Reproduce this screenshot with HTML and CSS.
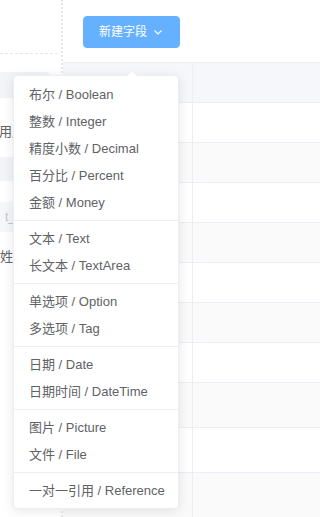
FILE: index.html
```html
<!DOCTYPE html>
<html lang="zh">
<head>
<meta charset="utf-8">
<title>新建字段</title>
<link rel="stylesheet" href="styles.css">
</head>
<body>
<div class="page">
  <aside class="side">
    <div class="side-top"></div>
    <div class="side-band"></div>
    <div class="side-label">用户名</div>
    <div class="side-band2"></div>
    <div class="side-input">t_</div>
    <div class="side-label2">姓名</div>
  </aside>
  <main class="main">
    <div class="toolbar">
      <button class="btn">新建字段<svg class="chev" viewBox="0 0 12 12" width="12" height="12"><polyline points="2.5,4.5 6,8 9.5,4.5" fill="none" stroke="#fff" stroke-width="1.1"/></svg></button>
    </div>
    <div class="table">
      <div class="row head"><div class="c1"></div><div class="c2"></div></div>
      <div class="row"><div class="c1"></div><div class="c2"></div></div>
      <div class="row stripe"><div class="c1"></div><div class="c2"></div></div>
      <div class="row"><div class="c1"></div><div class="c2"></div></div>
      <div class="row stripe"><div class="c1"></div><div class="c2"></div></div>
      <div class="row"><div class="c1"></div><div class="c2"></div></div>
      <div class="row stripe"><div class="c1"></div><div class="c2"></div></div>
      <div class="row"><div class="c1"></div><div class="c2"></div></div>
      <div class="row stripe tall"><div class="c1"></div><div class="c2"></div></div>
      <div class="row tall"><div class="c1"></div><div class="c2"></div></div>
      <div class="row stripe tall"><div class="c1"></div><div class="c2"></div></div>
    </div>
  </main>
  <ul class="menu">
    <li class="item">布尔 / Boolean</li>
    <li class="item">整数 / Integer</li>
    <li class="item">精度小数 / Decimal</li>
    <li class="item">百分比 / Percent</li>
    <li class="item">金额 / Money</li>
    <li class="item divided">文本 / Text</li>
    <li class="item">长文本 / TextArea</li>
    <li class="item divided">单选项 / Option</li>
    <li class="item">多选项 / Tag</li>
    <li class="item divided">日期 / Date</li>
    <li class="item">日期时间 / DateTime</li>
    <li class="item divided">图片 / Picture</li>
    <li class="item">文件 / File</li>
    <li class="item divided">一对一引用 / Reference</li>
  </ul>
</div>
</body>
</html>
```

FILE: styles.css
```css
html, body {
  margin: 0;
  padding: 0;
  background: #fff;
}
body {
  font-family: "Liberation Sans", "Noto Sans CJK SC", sans-serif;
  height: 517px;
  overflow: hidden;
}
.page {
  position: relative;
  display: flex;
  width: 100%;
  height: 517px;
  overflow: hidden;
}
.side {
  width: 61px;
  flex: none;
  border-right: 2px dotted #e6e8ef;
  overflow: hidden;
  font-size: 13px;
  color: #606266;
}
.side-top {
  height: 53px;
  border-bottom: 1px dashed #e4e7ed;
  margin-right: 3px;
}
.side-band {
  margin-top: 18px;
  height: 26px;
  width: 50px;
  background: #f3f4f7;
  border-radius: 0 4px 4px 0;
}
.side-label {
  margin-top: 26px;
  margin-left: -1px;
  line-height: 16px;
  white-space: nowrap;
}
.side-band2 {
  margin-top: 17px;
  height: 24px;
  width: 40px;
  background: #f3f4f7;
}
.side-input {
  margin-top: 21px;
  height: 30px;
  line-height: 30px;
  width: 50px;
  padding-left: 5px;
  box-sizing: border-box;
  background: #f5f7fa;
  color: #c0c4cc;
  font-size: 12px;
}
.side-label2 {
  margin-top: 17px;
  line-height: 16px;
  white-space: nowrap;
}
.main {
  flex: 1;
  display: flex;
  flex-direction: column;
}
.toolbar {
  height: 62px;
  padding: 16px 0 0 20px;
  box-sizing: border-box;
}
.btn {
  display: inline-flex;
  align-items: center;
  height: 32px;
  padding: 0 15px;
  border: 1px solid #66b1ff;
  border-radius: 4px;
  background: #66b1ff;
  color: #fff;
  font-family: "Liberation Sans", "Noto Sans CJK SC", sans-serif;
  font-size: 12px;
  line-height: 1;
  box-sizing: border-box;
}
.chev {
  margin-left: 5px;
}
.table {
  display: flex;
  flex-direction: column;
}
.row {
  display: flex;
  height: 40px;
  border-top: 1px solid #ebeef5;
  box-sizing: border-box;
}
.row.tall {
  height: 45px;
}
.row.head {
  background: #f5f7fa;
}
.row.stripe {
  background: #fafafa;
}
.c1 {
  width: 129px;
  border-right: 1px solid #ebeef5;
}
.c2 {
  flex: 1;
}
.menu {
  position: absolute;
  left: 13px;
  top: 75px;
  width: 166px;
  box-sizing: border-box;
  margin: 0;
  padding: 5px 0 4px;
  list-style: none;
  background: #fff;
  border: 1px solid #ebeef5;
  border-radius: 4px;
  box-shadow: 0 2px 12px 0 rgba(0, 0, 0, 0.1);
}
.menu::before {
  content: "";
  position: absolute;
  top: -12px;
  left: 112px;
  border: 6px solid transparent;
  border-bottom-color: #ebeef5;
}
.menu::after {
  content: "";
  position: absolute;
  top: -11px;
  left: 112px;
  border: 6px solid transparent;
  border-bottom-color: #fff;
}
.item {
  padding: 0 15px;
  line-height: 27px;
  font-size: 13px;
  color: #606266;
  white-space: nowrap;
}
.item.divided {
  margin-top: 4px;
  border-top: 1px solid #ebeef5;
}
.item.divided::before {
  content: "";
  display: block;
  height: 4px;
}
```
